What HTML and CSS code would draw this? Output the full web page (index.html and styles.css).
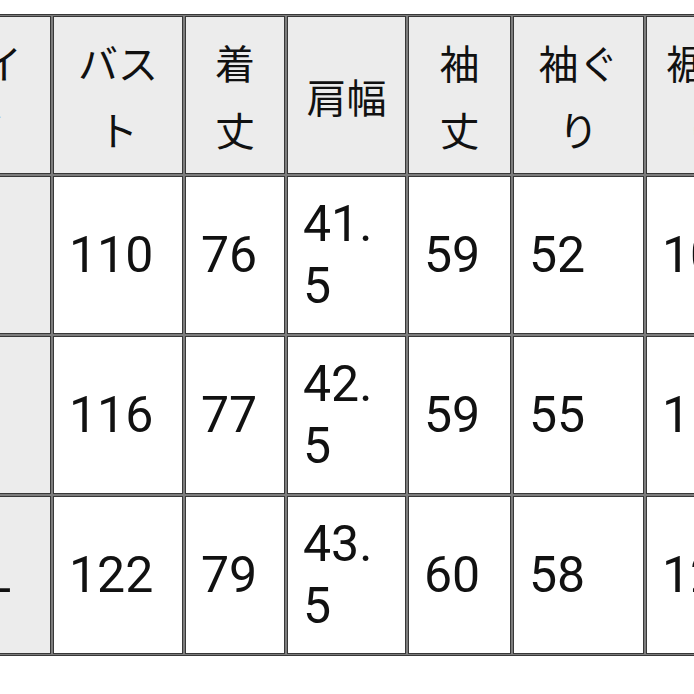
FILE: index.html
```html
<!DOCTYPE html>
<html lang="ja">
<head>
<meta charset="utf-8">
<title>サイズ表</title>
<link rel="stylesheet" href="styles.css">
</head>
<body>
<div class="size-table">
  <div class="cell head">サイズ</div>
  <div class="cell head">バスト</div>
  <div class="cell head">着丈</div>
  <div class="cell head">肩幅</div>
  <div class="cell head">袖丈</div>
  <div class="cell head">袖ぐり</div>
  <div class="cell head">裾周り</div>

  <div class="cell label">M</div>
  <div class="cell">110</div>
  <div class="cell">76</div>
  <div class="cell wrap">41.5</div>
  <div class="cell">59</div>
  <div class="cell">52</div>
  <div class="cell">108</div>

  <div class="cell label">L</div>
  <div class="cell">116</div>
  <div class="cell">77</div>
  <div class="cell wrap">42.5</div>
  <div class="cell">59</div>
  <div class="cell">55</div>
  <div class="cell">114</div>

  <div class="cell label">XL</div>
  <div class="cell">122</div>
  <div class="cell">79</div>
  <div class="cell wrap">43.5</div>
  <div class="cell">60</div>
  <div class="cell">58</div>
  <div class="cell">120</div>
</div>
</body>
</html>
```

FILE: styles.css
```css
html, body {
  margin: 0;
  padding: 0;
  background: #ffffff;
  overflow: hidden;
}

body {
  font-family: Roboto, "Noto Sans CJK JP", sans-serif;
  color: #111111;
}

.size-table {
  display: grid;
  grid-template-columns: 138px 130px 100px 119px 103px 131px 120px;
  grid-template-rows: repeat(4, 158px);
  gap: 2px;
  width: max-content;
  margin: 14px 0 0 -89px;
  padding: 1px;
  border: 1px solid #383838;
  background: #7c7c7c;
}

.cell {
  display: flex;
  align-items: center;
  box-sizing: border-box;
  padding: 0 15px;
  border: 1px solid #383838;
  background: #ffffff;
  font-size: 50px;
  line-height: 62px;
  white-space: nowrap;
}

.cell.wrap {
  white-space: normal;
  word-break: break-all;
}

.cell.head {
  justify-content: center;
  text-align: center;
  padding-top: 8px;
  background: #ececec;
  font-size: 40px;
  line-height: 67px;
  white-space: normal;
}

.cell.label {
  justify-content: center;
  text-align: center;
  background: #ececec;
}
```
